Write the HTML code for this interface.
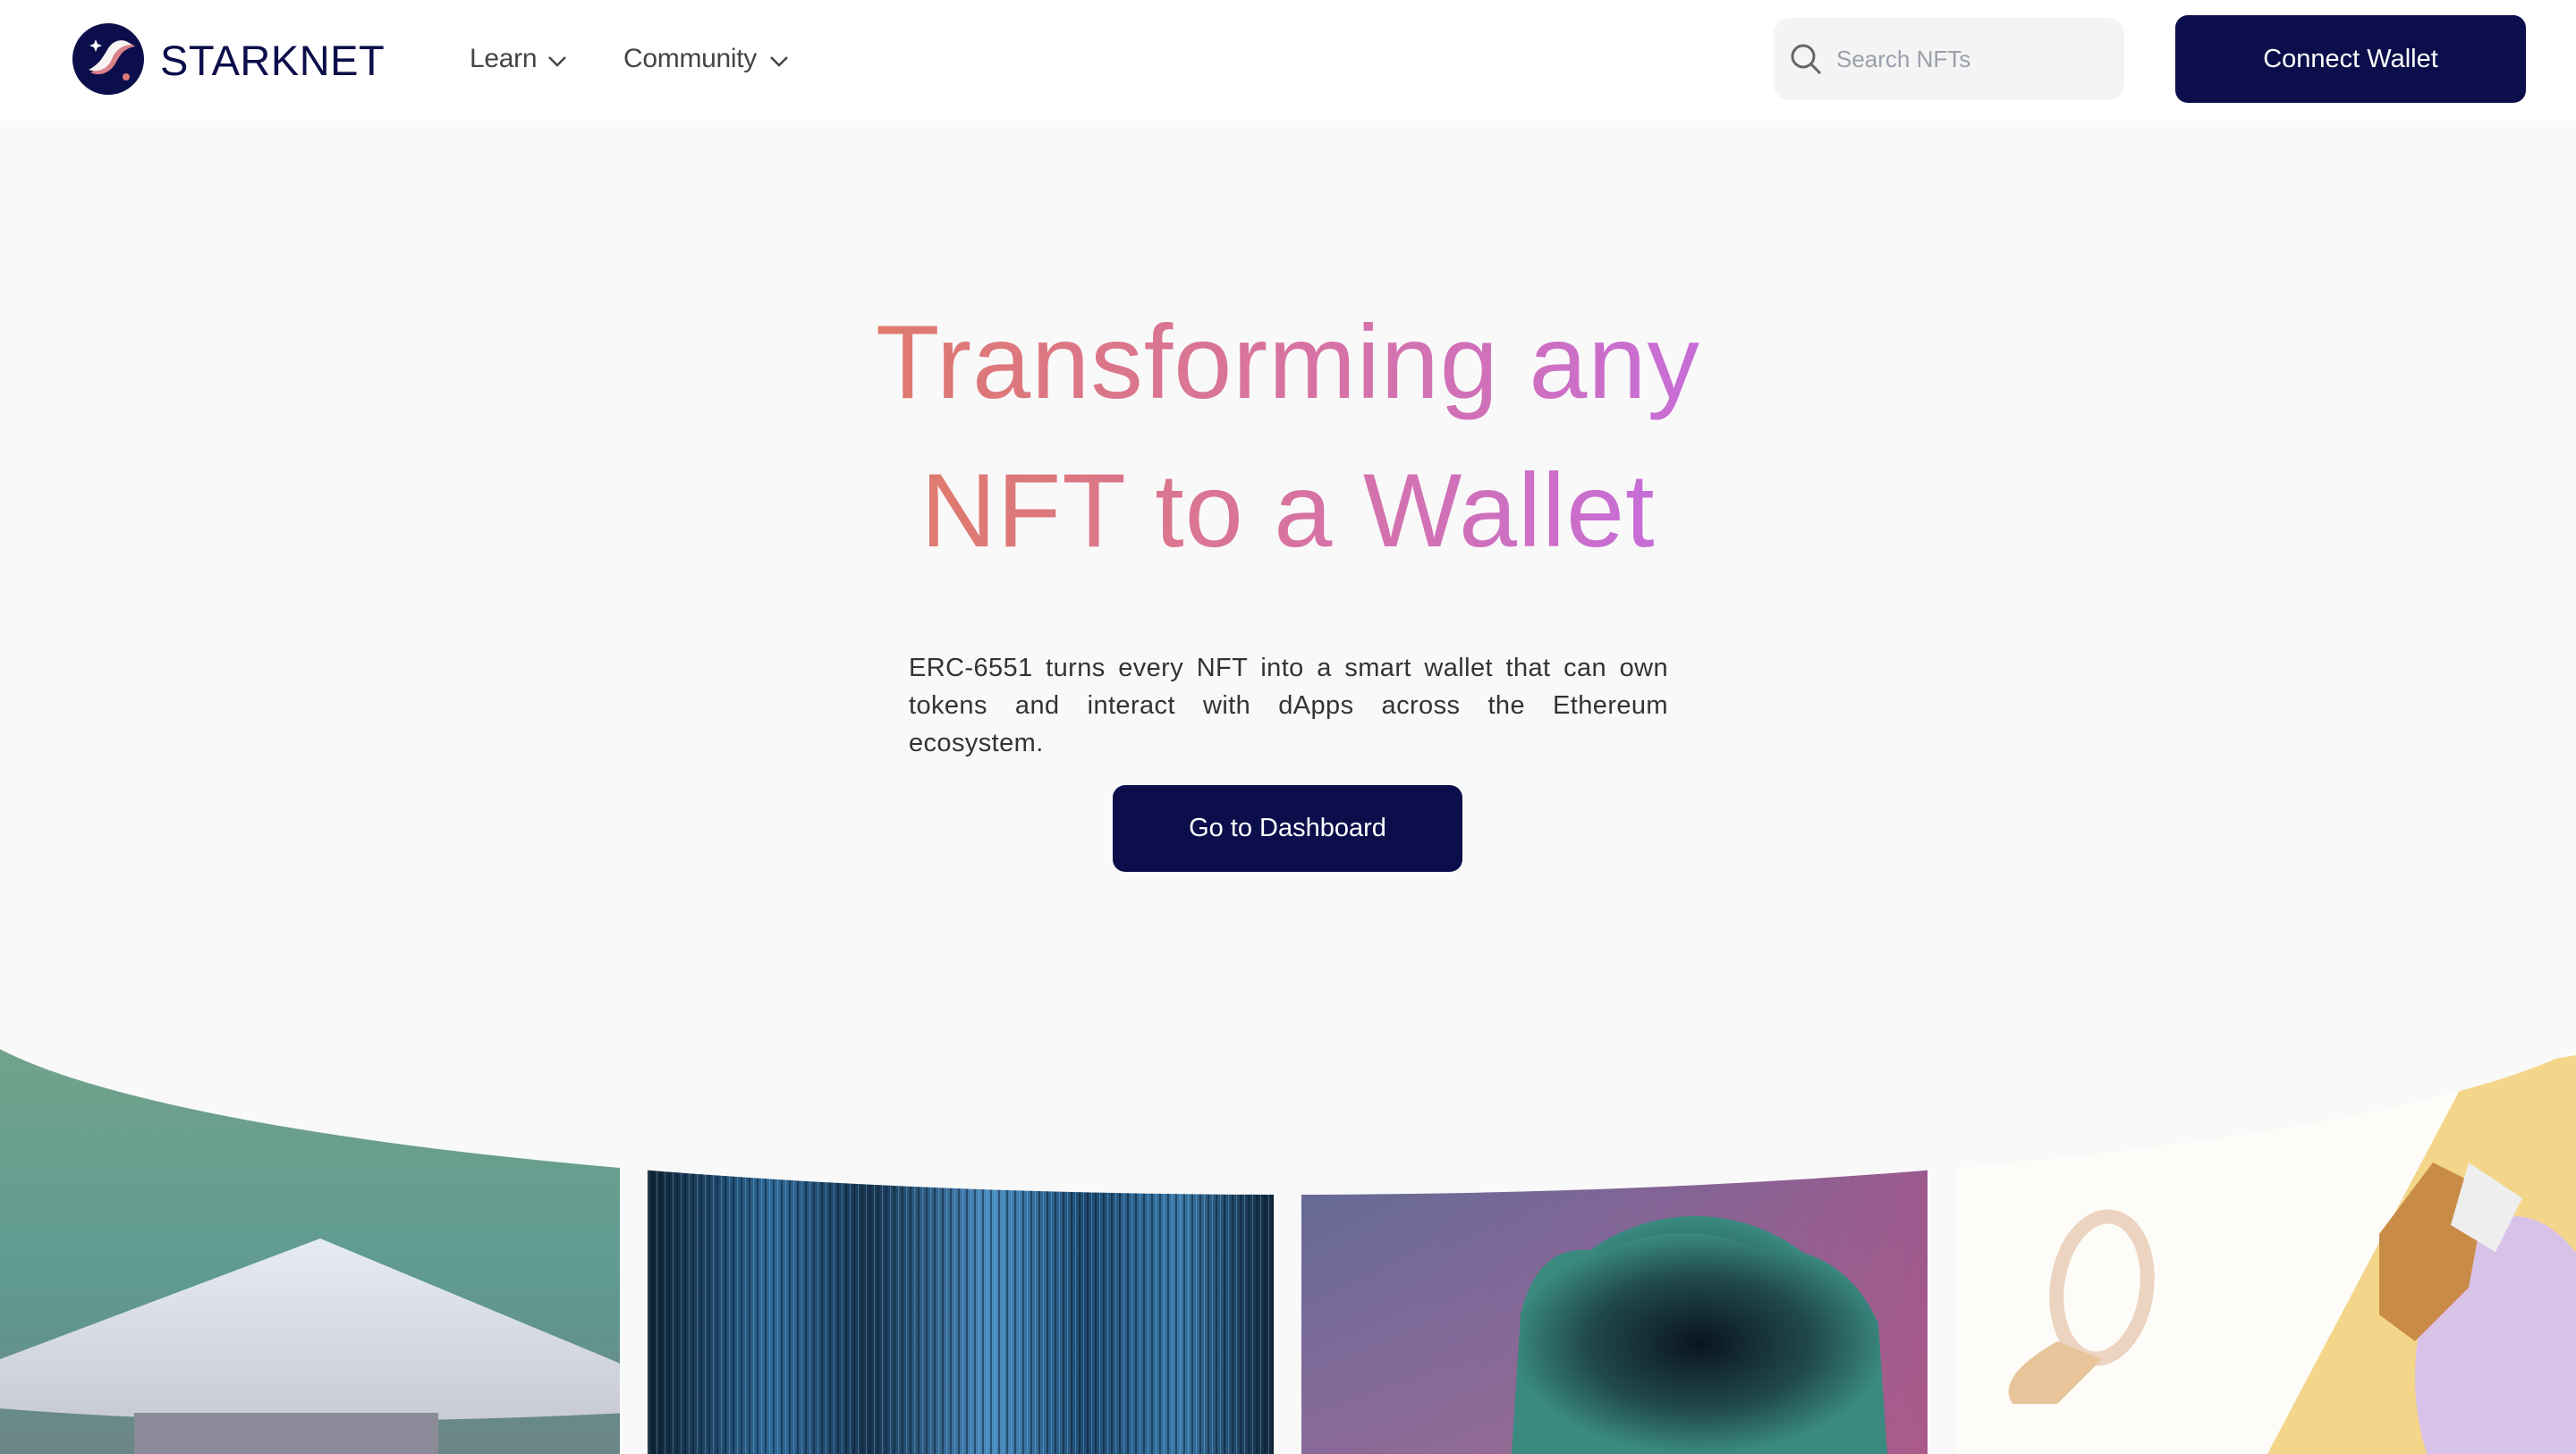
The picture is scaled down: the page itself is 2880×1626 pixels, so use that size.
<!DOCTYPE html>
<html><head><meta charset="utf-8"><style>
*{margin:0;padding:0;box-sizing:border-box}
html,body{width:2880px;height:1626px;overflow:hidden}
body{background:#f9f9f9;font-family:"Liberation Sans",sans-serif;position:relative}
.nav{position:absolute;left:0;top:0;width:2880px;height:135px;background:#fff}
.abs{position:absolute}
.navlink{position:absolute;top:49px;font-size:30px;color:#444;letter-spacing:-0.3px}
.search{left:1983px;top:20px;width:392px;height:92px;background:#f4f4f4;border-radius:18px}
.search span{position:absolute;left:70px;top:31px;font-size:26px;color:#9aa0aa}
.btn{background:#0c0e4b;color:#fff;border-radius:14px;text-align:center;font-size:29px}
h1{position:absolute;left:0;width:2880px;text-align:center;font-size:117px;font-weight:normal;letter-spacing:1px;line-height:166px}
h1 span{background:linear-gradient(90deg,#df7a6c 0%,#d873a0 50%,#c76dd8 100%);-webkit-background-clip:text;background-clip:text;color:transparent}
p.desc{position:absolute;left:1016px;top:726px;width:849px;font-size:29px;line-height:42px;color:#333;text-align:justify;letter-spacing:0.4px}
</style></head><body>
<div class="nav">
<svg class="abs" style="left:81px;top:26px" width="80" height="80" viewBox="0 0 80 80">
<circle cx="40" cy="40" r="40" fill="#0c0e4b"/>
<path d="M20 55 C30 60 42 56 48 45 C54 34 58 28 70 26 C64 20 52 20 46 30 C40 40 36 48 20 55Z" fill="#d98088"/>
<path d="M18 52 C30 56 40 50 44 40 C48 30 56 24 66 24 C58 16 46 18 40 28 C34 38 30 46 18 52Z" fill="#f8f4f4"/>
<circle cx="60" cy="60" r="4" fill="#e07a7a"/>
<path d="M26 18 L28 23 L33 25 L28 27 L26 32 L24 27 L19 25 L24 23Z" fill="#fff"/>
</svg>
<div class="abs" style="left:179px;top:40px;font-size:47px;color:#0c0e4b;letter-spacing:0.5px">STARKNET</div>
<div class="navlink" style="left:525px">Learn</div>
<svg class="abs" style="left:612px;top:62px" width="22" height="14"><path d="M2 2 L11 11 L20 2" stroke="#444" stroke-width="2.5" fill="none"/></svg>
<div class="navlink" style="left:697px">Community</div>
<svg class="abs" style="left:860px;top:62px" width="22" height="14"><path d="M2 2 L11 11 L20 2" stroke="#444" stroke-width="2.5" fill="none"/></svg>
<div class="abs search"><svg class="abs" style="left:18px;top:28px" width="40" height="40"><circle cx="15" cy="15" r="12" stroke="#666" stroke-width="3" fill="none"/><path d="M24 24 L34 34" stroke="#666" stroke-width="3"/></svg><span>Search NFTs</span></div>
<div class="abs btn" style="left:2432px;top:17px;width:392px;height:98px;line-height:98px">Connect Wallet</div>
</div>
<h1 style="top:322px"><span>Transforming any</span></h1>
<h1 style="top:488px"><span>NFT to a Wallet</span></h1>
<p class="desc">ERC-6551 turns every NFT into a smart wallet that can own tokens and interact with dApps across the Ethereum ecosystem.</p>
<div class="abs btn" style="left:1244px;top:878px;width:391px;height:97px;line-height:97px">Go to Dashboard</div>

<svg class="abs" style="left:0;top:1100px" width="2880" height="526" viewBox="0 1100 2880 526">
<defs>
<linearGradient id="g1" x1="0" y1="0" x2="0" y2="1"><stop offset="0" stop-color="#74a38a"/><stop offset="0.6" stop-color="#5f9a92"/><stop offset="1" stop-color="#6b8585"/></linearGradient>
<linearGradient id="g2" x1="0" y1="0" x2="1" y2="0"><stop offset="0" stop-color="#0f2233"/><stop offset="0.2" stop-color="#2f6a9a"/><stop offset="0.35" stop-color="#17344f"/><stop offset="0.55" stop-color="#4a8cc0"/><stop offset="0.7" stop-color="#1d4a70"/><stop offset="0.85" stop-color="#3a78a8"/><stop offset="1" stop-color="#10263a"/></linearGradient>
<pattern id="st" width="9" height="40" patternUnits="userSpaceOnUse"><rect width="2" height="40" fill="#0a1a2a" opacity="0.5"/><rect x="5" width="1" height="40" fill="#8ac4ee" opacity="0.35"/></pattern>
<linearGradient id="g3" x1="0" y1="0" x2="1" y2="1"><stop offset="0" stop-color="#4c6a90"/><stop offset="0.5" stop-color="#8a6a9a"/><stop offset="1" stop-color="#c4708a"/></linearGradient>
<linearGradient id="g3b" x1="0" y1="0" x2="1" y2="0"><stop offset="0" stop-color="#4a6c94" stop-opacity="0"/><stop offset="1" stop-color="#9a4c8a" stop-opacity="0.6"/></linearGradient>
<radialGradient id="fe" cx="0.5" cy="0.5" r="0.5"><stop offset="0" stop-color="#0a1420"/><stop offset="0.6" stop-color="#214a4a"/><stop offset="1" stop-color="#3a8a80"/></radialGradient>
<linearGradient id="cone" x1="0" y1="0" x2="0" y2="1"><stop offset="0" stop-color="#e6ecf2"/><stop offset="1" stop-color="#c8cbd6"/></linearGradient>
<clipPath id="c1"><rect x="0" y="1100" width="693" height="526"/></clipPath>
</defs>
<g clip-path="url(#c1)">
<rect x="0" y="1140" width="693" height="486" fill="url(#g1)"/>
<path d="M358 1385 L730 1540 L700 1580 Q300 1600 0 1575 L0 1520Z" fill="url(#cone)"/>
<rect x="150" y="1580" width="340" height="46" fill="#8a8a98"/>
</g>
<rect x="724" y="1140" width="700" height="486" fill="url(#g2)"/>
<rect x="724" y="1140" width="700" height="486" fill="url(#st)"/>
<rect x="1455" y="1140" width="700" height="486" fill="url(#g3)"/>
<rect x="1455" y="1140" width="700" height="486" fill="url(#g3b)"/>
<ellipse cx="1895" cy="1560" rx="200" ry="200" fill="url(#fe)"/>
<path d="M1700 1470 Q1720 1385 1790 1400 Q1880 1360 1960 1395 Q2060 1390 2100 1480 L2110 1626 L1690 1626Z" fill="url(#fe)"/>
<rect x="2186" y="1140" width="694" height="486" fill="#fdfcf8"/>
<path d="M2760 1200 L2880 1180 L2880 1626 L2535 1626Z" fill="#f4d68a"/>
<ellipse cx="2810" cy="1540" rx="110" ry="180" fill="#d9c2e8"/>
<path d="M2660 1380 L2720 1300 L2780 1330 L2760 1440 L2700 1500 L2660 1470Z" fill="#c98c48"/>
<path d="M2760 1300 L2820 1340 L2790 1400 L2740 1370Z" fill="#eee"/>
<ellipse cx="2350" cy="1440" rx="50" ry="80" fill="none" stroke="#ecd4c0" stroke-width="16" transform="rotate(8 2350 1440)"/>
<path d="M2300 1500 L2350 1520 L2300 1570 L2250 1570 Q2230 1540 2300 1500Z" fill="#e8c49a"/>
<ellipse cx="1440" cy="1110" rx="1500" ry="226" fill="#f9f9f9"/>
<rect x="0" y="1100" width="2880" height="12" fill="#f9f9f9"/>
</svg>
</body></html>
